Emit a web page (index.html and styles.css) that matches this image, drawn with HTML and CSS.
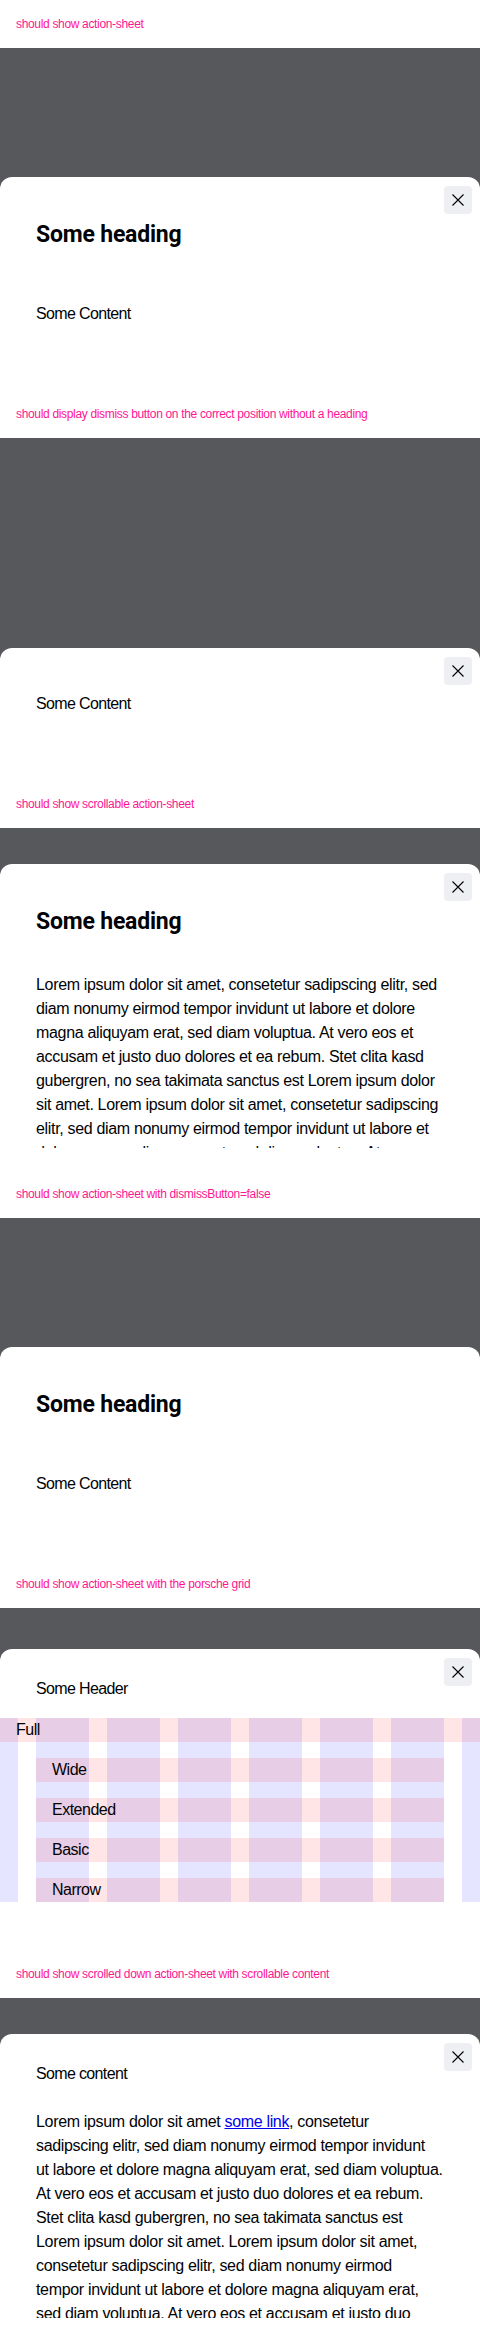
FILE: index.html
```html
<!DOCTYPE html>
<html lang="en">
<head>
<meta charset="utf-8">
<title>Action sheet</title>
<link rel="stylesheet" href="styles.css">
</head>
<body>

<section class="case">
  <p class="label">should show action-sheet</p>
  <div class="stage">
    <div class="sheet">
      <button class="dismiss" aria-label="Dismiss"><svg viewBox="0 0 12 12" width="12" height="12"><path d="M0.5 0.5 L11.5 11.5 M11.5 0.5 L0.5 11.5"/></svg></button>
      <div class="scroller">
        <h2 class="heading">Some heading</h2>
        <p class="content">Some Content</p>
      </div>
    </div>
  </div>
</section>

<section class="case">
  <p class="label">should display dismiss button on the correct position without a heading</p>
  <div class="stage">
    <div class="sheet">
      <button class="dismiss" aria-label="Dismiss"><svg viewBox="0 0 12 12" width="12" height="12"><path d="M0.5 0.5 L11.5 11.5 M11.5 0.5 L0.5 11.5"/></svg></button>
      <div class="scroller">
        <p class="content">Some Content</p>
      </div>
    </div>
  </div>
</section>

<section class="case">
  <p class="label">should show scrollable action-sheet</p>
  <div class="stage">
    <div class="sheet">
      <button class="dismiss" aria-label="Dismiss"><svg viewBox="0 0 12 12" width="12" height="12"><path d="M0.5 0.5 L11.5 11.5 M11.5 0.5 L0.5 11.5"/></svg></button>
      <div class="scroller">
        <h2 class="heading">Some heading</h2>
        <p class="para">Lorem ipsum dolor sit amet, consetetur sadipscing elitr, sed<br>
diam nonumy eirmod tempor invidunt ut labore et dolore<br>
magna aliquyam erat, sed diam voluptua. At vero eos et<br>
accusam et justo duo dolores et ea rebum. Stet clita kasd<br>
gubergren, no sea takimata sanctus est Lorem ipsum dolor<br>
sit amet. Lorem ipsum dolor sit amet, consetetur sadipscing<br>
elitr, sed diam nonumy eirmod tempor invidunt ut labore et<br>
dolore magna aliquyam erat, sed diam voluptua. At vero eos</p>
      </div>
    </div>
  </div>
</section>

<section class="case">
  <p class="label">should show action-sheet with dismissButton=false</p>
  <div class="stage">
    <div class="sheet">
      <div class="scroller">
        <h2 class="heading">Some heading</h2>
        <p class="content">Some Content</p>
      </div>
    </div>
  </div>
</section>

<section class="case">
  <p class="label">should show action-sheet with the porsche grid</p>
  <div class="stage">
    <div class="sheet">
      <button class="dismiss" aria-label="Dismiss"><svg viewBox="0 0 12 12" width="12" height="12"><path d="M0.5 0.5 L11.5 11.5 M11.5 0.5 L0.5 11.5"/></svg></button>
      <div class="scroller">
        <div class="header header-grid">Some Header</div>
        <div class="pgrid">
          <span class="gcol c1"></span>
          <span class="gcol c2"></span>
          <span class="gcol c3"></span>
          <span class="gcol c4"></span>
          <span class="gcol c5"></span>
          <span class="gcol c6"></span>
          <span class="gcol c7"></span>
          <span class="gcol c8"></span>
          <div class="grow r-full">Full</div>
          <div class="grow r-wide">Wide</div>
          <div class="grow r-extended">Extended</div>
          <div class="grow r-basic">Basic</div>
          <div class="grow r-narrow">Narrow</div>
        </div>
      </div>
    </div>
  </div>
</section>

<section class="case">
  <p class="label">should show scrolled down action-sheet with scrollable content</p>
  <div class="stage">
    <div class="sheet">
      <button class="dismiss" aria-label="Dismiss"><svg viewBox="0 0 12 12" width="12" height="12"><path d="M0.5 0.5 L11.5 11.5 M11.5 0.5 L0.5 11.5"/></svg></button>
      <div class="scroller">
        <div class="header header-text">Some content</div>
        <p class="para">Lorem ipsum dolor sit amet <a href="#">some link</a>, consetetur<br>
sadipscing elitr, sed diam nonumy eirmod tempor invidunt<br>
ut labore et dolore magna aliquyam erat, sed diam voluptua.<br>
At vero eos et accusam et justo duo dolores et ea rebum.<br>
Stet clita kasd gubergren, no sea takimata sanctus est<br>
Lorem ipsum dolor sit amet. Lorem ipsum dolor sit amet,<br>
consetetur sadipscing elitr, sed diam nonumy eirmod<br>
tempor invidunt ut labore et dolore magna aliquyam erat,<br>
sed diam voluptua. At vero eos et accusam et justo duo</p>
      </div>
    </div>
  </div>
</section>

</body>
</html>
```

FILE: styles.css
```css
html, body {
  margin: 0;
  padding: 0;
  background: #ffffff;
}

body {
  width: 480px;
  font-family: "Liberation Sans", Arial, sans-serif;
  color: #010205;
}

.case {
  height: 390px;
  display: flex;
  flex-direction: column;
}

.label {
  margin: 0;
  height: 48px;
  padding: 0 16px;
  font-size: 12px;
  line-height: 48px;
  letter-spacing: -0.33px;
  color: #ff1493;
  white-space: nowrap;
}

.stage {
  height: 342px;
  background: #57585b;
  display: flex;
  flex-direction: column;
  justify-content: flex-end;
  overflow: hidden;
}

.sheet {
  position: relative;
  flex: none;
  max-height: 306px;
  display: flex;
  flex-direction: column;
  background: #ffffff;
  border-radius: 12px 12px 0 0;
  padding-bottom: 22px;
  box-sizing: border-box;
}

.dismiss {
  position: absolute;
  top: 9px;
  right: 8px;
  width: 28px;
  height: 28px;
  padding: 0;
  border: 0;
  border-radius: 4px;
  background: #eeeff2;
  display: flex;
  align-items: center;
  justify-content: center;
  z-index: 2;
}

.dismiss svg {
  display: block;
  fill: none;
  stroke: #010205;
  stroke-width: 1.1;
}

.scroller {
  flex: 1 1 auto;
  min-height: 0;
  overflow: hidden;
  display: flex;
  flex-direction: column;
  padding: 28px 0 26px;
  font-size: 16px;
  line-height: 24px;
  letter-spacing: -0.33px;
}

.heading {
  margin: 15px 36px 36px;
  font-family: Roboto, "Liberation Sans", sans-serif;
  font-weight: 700;
  font-size: 23px;
  line-height: 30px;
  letter-spacing: -0.2px;
}

.content {
  margin: 16px 36px;
  letter-spacing: -0.65px;
}

.para {
  margin: 0 36px;
  white-space: nowrap;
}

.para a {
  color: #0000ee;
  text-decoration: underline;
}

.header {
  margin: 0 36px;
  letter-spacing: -0.65px;
}

.header-grid {
  margin-bottom: 17px;
}

.header-text {
  margin-bottom: 24px;
}

/* Porsche grid demo */
.pgrid {
  display: grid;
  grid-template-columns: 18px repeat(6, minmax(0, 1fr)) 18px;
  grid-template-rows: repeat(5, 24px);
  column-gap: 18px;
  row-gap: 16px;
}

.gcol {
  grid-row: 1 / 6;
  background: rgba(0, 0, 255, 0.1);
}

.c1 { grid-column: 1; }
.c2 { grid-column: 2; }
.c3 { grid-column: 3; }
.c4 { grid-column: 4; }
.c5 { grid-column: 5; }
.c6 { grid-column: 6; }
.c7 { grid-column: 7; }
.c8 { grid-column: 8; }

.grow {
  background: rgba(255, 0, 0, 0.1);
  padding-left: 16px;
  grid-column: 2 / 8;
  letter-spacing: -0.5px;
}

.r-full { grid-row: 1; grid-column: 1 / -1; }
.r-wide { grid-row: 2; }
.r-extended { grid-row: 3; }
.r-basic { grid-row: 4; }
.r-narrow { grid-row: 5; }
```
